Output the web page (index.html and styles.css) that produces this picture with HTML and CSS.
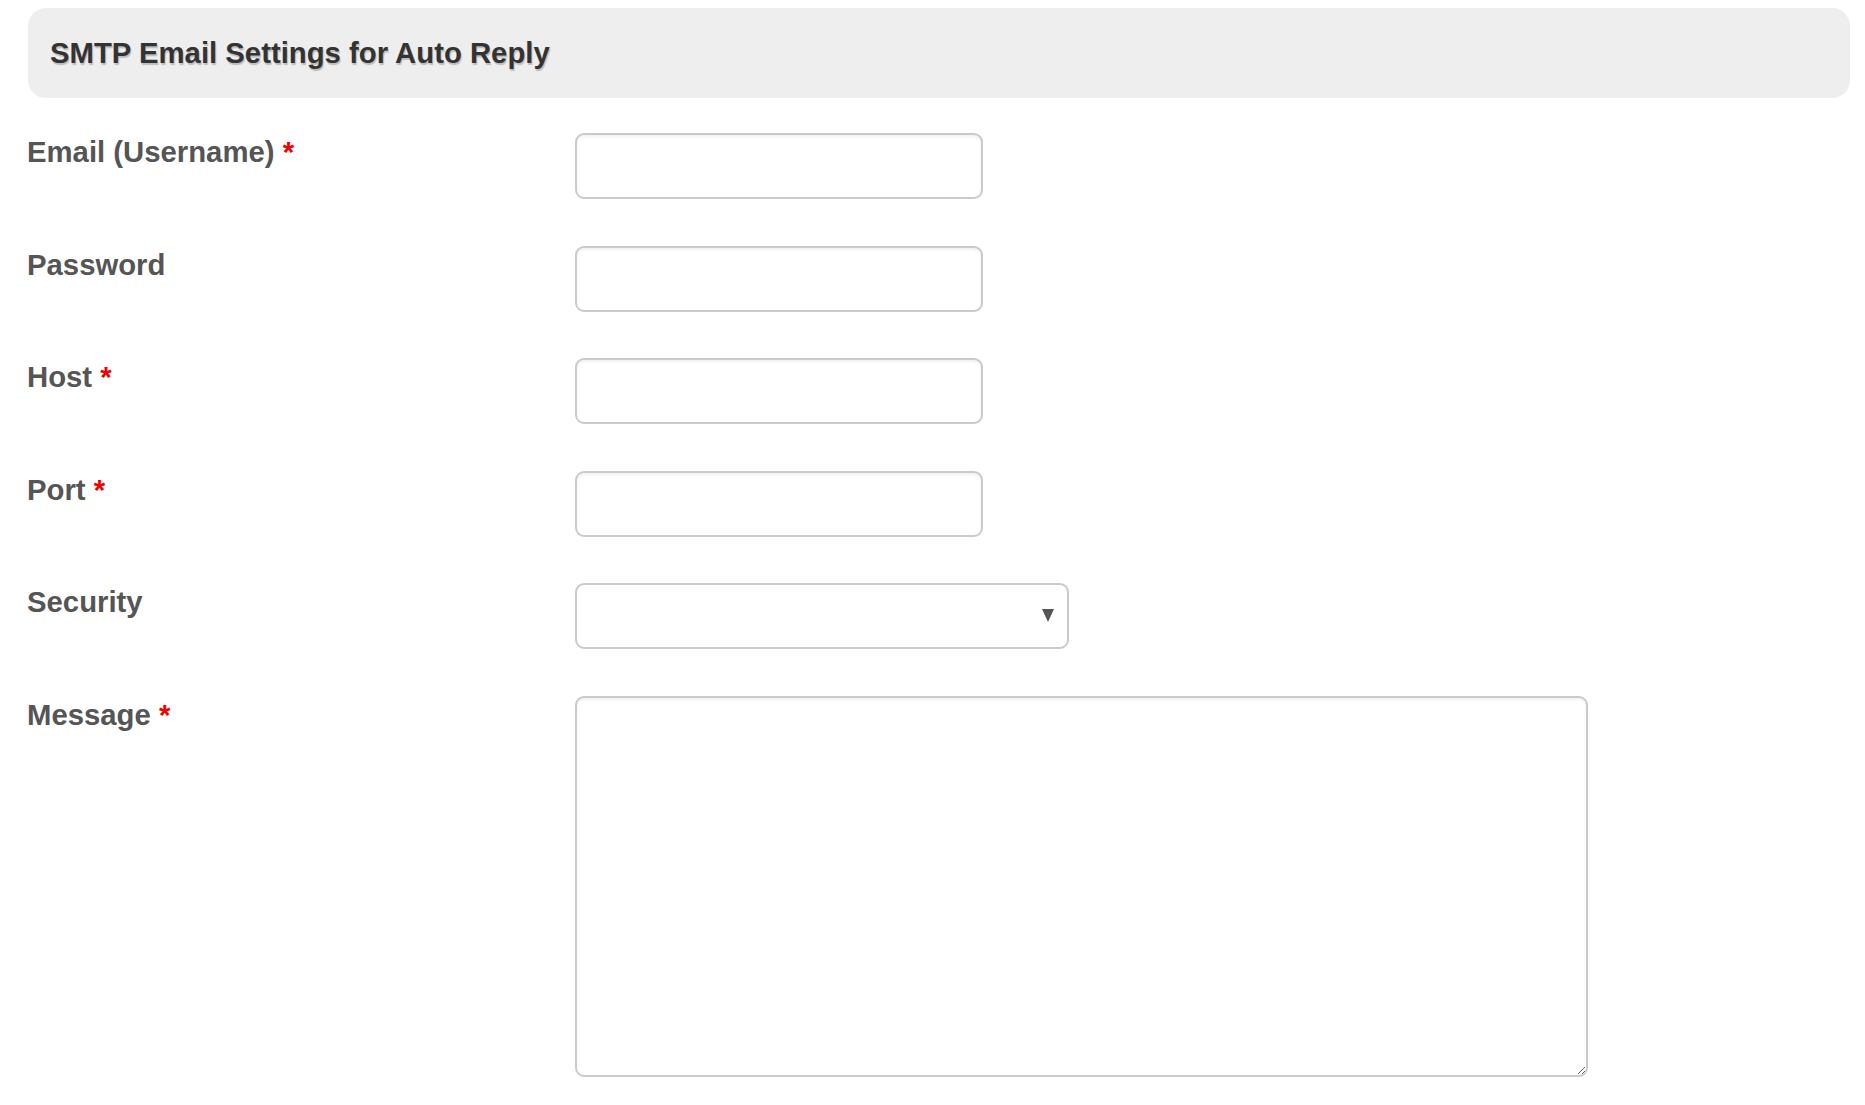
FILE: index.html
```html
<!DOCTYPE html>
<html lang="en">
<head>
    <meta charset="UTF-8">
    <meta name="viewport" content="width=device-width, initial-scale=1.0">
    <title>SMTP Email Settings for Auto Reply</title>
    <link rel="stylesheet" href="styles.css">
</head>
<body>
    <div class="page">
        <div class="panel-head">
            <h2>SMTP Email Settings for Auto Reply</h2>
        </div>

        <form class="smtp-form">
            <label for="smtpUser">Email (Username) <span class="req">*</span></label>
            <div><input type="text" id="smtpUser" class="field"></div>

            <label for="smtpPass">Password</label>
            <div><input type="password" id="smtpPass" class="field"></div>

            <label for="smtpHost">Host <span class="req">*</span></label>
            <div><input type="text" id="smtpHost" class="field"></div>

            <label for="smtpPort">Port <span class="req">*</span></label>
            <div><input type="text" id="smtpPort" class="field"></div>

            <label for="smtpSecurity">Security</label>
            <div>
                <div class="select-wrap">
                    <select id="smtpSecurity" class="field select">
                        <option value=""></option>
                        <option value="ssl">SSL</option>
                        <option value="tls">TLS</option>
                    </select>
                </div>
            </div>

            <label for="smtpMessage">Message <span class="req">*</span></label>
            <div><textarea id="smtpMessage" class="field message"></textarea></div>
        </form>
    </div>
</body>
</html>
```

FILE: styles.css
```css
body {
    margin: 0;
    font-family: "Liberation Sans", Arial, sans-serif;
    background-color: #fff;
}
.page {
    padding: 8px 15px 0 27px;
}
.panel-head {
    margin-left: 1px;
    background-color: #eeeeee;
    border-radius: 18px;
    padding: 31px 20px 31px 22px;
}
.panel-head h2 {
    margin: 0;
    font-size: 29.3px;
    line-height: 28px;
    font-weight: bold;
    color: #333;
    text-shadow: 1px 2px 1px #bdbdbd;
}
.smtp-form {
    display: grid;
    grid-template-columns: 548px 1fr;
    row-gap: 46.5px;
    margin-top: 35px;
}
.smtp-form label {
    padding-top: 4px;
    font-size: 29.3px;
    line-height: 29px;
    font-weight: bold;
    color: #555;
}
.req {
    color: #e00;
}
.field {
    box-sizing: border-box;
    display: block;
    width: 408px;
    height: 66px;
    margin: 0;
    padding: 8px 12px;
    font-family: "Liberation Sans", Arial, sans-serif;
    font-size: 20px;
    color: #333;
    background-color: #fff;
    border: 2px solid #cacaca;
    border-radius: 9px;
    box-shadow: inset 0 2px 3px rgba(0, 0, 0, 0.06);
    outline: none;
}
.select-wrap {
    position: relative;
    width: 494px;
}
.select {
    width: 494px;
    -webkit-appearance: none;
    appearance: none;
    box-shadow: none;
}
.select-wrap::after {
    content: "";
    position: absolute;
    right: 15px;
    top: 26px;
    border-left: 6.5px solid transparent;
    border-right: 6.5px solid transparent;
    border-top: 13px solid #555;
    pointer-events: none;
}
.message {
    width: 1013px;
    height: 381px;
    resize: both;
}
```
